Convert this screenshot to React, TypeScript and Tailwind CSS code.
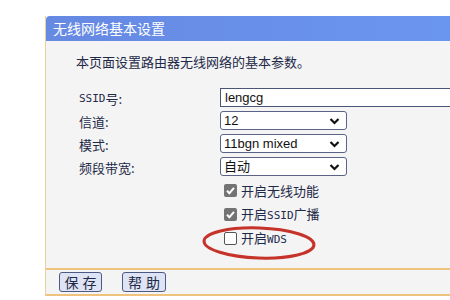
import React from "react";

const font = { fontFamily: '"Noto Sans CJK SC", "Noto Sans", sans-serif' };

function Chevron() {
  return (
    <svg width="11" height="8" viewBox="0 0 11 8" className="shrink-0">
      <path d="M1.5 2 L5.5 6 L9.5 2" fill="none" stroke="#111" strokeWidth="2.2" />
    </svg>
  );
}

function Select({ value }: { value: string }) {
  return (
    <div className="flex items-center justify-between w-[127px] h-[19px] bg-white border border-[#5a6385] rounded-[3px] pl-[3px] pr-[6px] text-[13px] leading-none text-[#111]" style={{ fontFamily: '"Liberation Sans", "Noto Sans CJK SC", sans-serif' }}>
      <span>{value}</span>
      <Chevron />
    </div>
  );
}

function Check({ checked, label }: { checked: boolean; label: React.ReactNode }) {
  return (
    <div className="flex items-center gap-[4px] h-[24px]">
      {checked ? (
        <div className="w-[13px] h-[13px] rounded-[2px] bg-[#737373] flex items-center justify-center">
          <svg width="11" height="11" viewBox="0 0 11 11">
            <path d="M2 5.8 L4.4 8.2 L9 2.8" fill="none" stroke="#fff" strokeWidth="2" />
          </svg>
        </div>
      ) : (
        <div className="w-[13px] h-[13px] rounded-[2px] border border-[#555] bg-white" />
      )}
      <span className="text-[13px] text-[#1e2a48] leading-none">{label}</span>
    </div>
  );
}

const mono = { fontFamily: '"DejaVu Sans Mono", "Liberation Mono", monospace' };

export default function App() {
  return (
    <div className="w-[450px] h-[300px] bg-white overflow-hidden pt-[16px] pl-[45px]" style={font}>
      <div className="w-[440px] flex flex-col border-l border-[#ead29a]">
        <div className="h-[25px] bg-gradient-to-r from-[#6689e2] to-[#6b97f1] rounded-tl-[4px] flex items-center pl-[7px] text-white text-[14px]">
          无线网络基本设置
        </div>
        <div className="bg-[#f4f4f4] h-[227px] flex flex-col">
          <div className="pt-[11px] pl-[30px] text-[13px] text-[#1e2a48] leading-[20px]">本页面设置路由器无线网络的基本参数。</div>
          <div className="flex mt-[16px]">
            <div className="w-[174px] pl-[33px] flex flex-col text-[13px] text-[#1e2a48]">
              <div className="h-[22px] flex items-center"><span style={mono} className="text-[11px]">SSID</span>号:</div>
              <div className="h-[23px] flex items-center">信道:</div>
              <div className="h-[23px] flex items-center">模式:</div>
              <div className="h-[23px] flex items-center">频段带宽:</div>
            </div>
            <div className="flex flex-col gap-[4px]">
              <div className="w-[240px] h-[19px] bg-white border border-r-0 border-[#4b5578] pl-[4px] flex items-center text-[13px] text-[#111]" style={{ fontFamily: '"Liberation Sans", sans-serif' }}>lengcg</div>
              <Select value="12" />
              <Select value="11bgn mixed" />
              <Select value="自动" />
            </div>
          </div>
          <div className="relative flex flex-col pl-[178px] -mt-[1px]">
            <Check checked label="开启无线功能" />
            <Check checked label={<>开启<span style={mono} className="text-[11px]">SSID</span>广播</>} />
            <Check checked={false} label={<>开启<span style={mono} className="text-[11px]">WDS</span></>} />
            <svg className="absolute left-[155px] top-[47px]" width="116" height="36" viewBox="0 0 116 36">
              <ellipse cx="58" cy="18" rx="55" ry="15" fill="none" stroke="#c6332a" strokeWidth="3" transform="rotate(2 58 18)" />
            </svg>
          </div>
        </div>
        <div className="h-[2px] bg-[#efc27d]" />
        <div className="bg-[#f4f4f4] h-[24px] flex items-center pl-[13px] gap-[20px]">
          <div className="w-[43px] h-[20px] bg-[#dfe4f4] border border-[#4d5a86] rounded-[3px] flex items-center justify-center text-[14px] text-[#1e2a48] tracking-[4px] pl-[4px]">保存</div>
          <div className="w-[44px] h-[20px] bg-[#dfe4f4] border border-[#4d5a86] rounded-[3px] flex items-center justify-center text-[14px] text-[#1e2a48] tracking-[4px] pl-[4px]">帮助</div>
        </div>
        <div className="h-[2px] bg-[#efc27d]" />
      </div>
    </div>
  );
}
